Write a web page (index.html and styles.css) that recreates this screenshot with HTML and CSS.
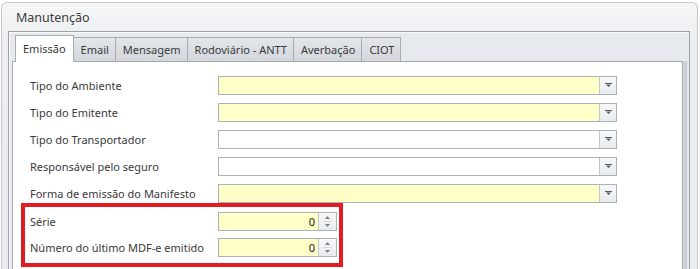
FILE: index.html
```html
<!DOCTYPE html>
<html lang="pt">
<head>
<meta charset="utf-8">
<title>Manutenção</title>
<link rel="stylesheet" href="styles.css">
</head>
<body>
<div class="window">
  <div class="title">Manutenção</div>
  <div class="group">
    <div class="tabs">
      <div class="tab active">Emissão</div>
      <div class="tab">Email</div>
      <div class="tab">Mensagem</div>
      <div class="tab">Rodoviário - ANTT</div>
      <div class="tab">Averbação</div>
      <div class="tab">CIOT</div>
    </div>
    <div class="page">
      <div class="form">
        <label class="lbl">Tipo do Ambiente</label>
        <div class="combo req"><div class="field"></div><div class="btn"><svg width="7" height="4" viewBox="0 0 7 4"><path d="M0 0h7v1H0z M1 1.5h5L3.5 4z" fill="#555a60"/></svg></div></div>
        <label class="lbl">Tipo do Emitente</label>
        <div class="combo req"><div class="field"></div><div class="btn"><svg width="7" height="4" viewBox="0 0 7 4"><path d="M0 0h7v1H0z M1 1.5h5L3.5 4z" fill="#555a60"/></svg></div></div>
        <label class="lbl">Tipo do Transportador</label>
        <div class="combo"><div class="field"></div><div class="btn"><svg width="7" height="4" viewBox="0 0 7 4"><path d="M0 0h7v1H0z M1 1.5h5L3.5 4z" fill="#555a60"/></svg></div></div>
        <label class="lbl">Responsável pelo seguro</label>
        <div class="combo"><div class="field"></div><div class="btn"><svg width="7" height="4" viewBox="0 0 7 4"><path d="M0 0h7v1H0z M1 1.5h5L3.5 4z" fill="#555a60"/></svg></div></div>
        <label class="lbl">Forma de emissão do Manifesto</label>
        <div class="combo req"><div class="field"></div><div class="btn"><svg width="7" height="4" viewBox="0 0 7 4"><path d="M0 0h7v1H0z M1 1.5h5L3.5 4z" fill="#555a60"/></svg></div></div>
        <label class="lbl spin-row">Série</label>
        <div class="spin req spin-row"><div class="field num">0</div><div class="sbtn"><svg width="5" height="3" viewBox="0 0 5 3"><path d="M0 3h5L2.5 0z" fill="#7a7f86"/></svg><span class="sep"></span><svg width="5" height="3" viewBox="0 0 5 3"><path d="M0 0h5L2.5 3z" fill="#7a7f86"/></svg></div></div>
        <label class="lbl">Número do último MDF-e emitido</label>
        <div class="spin req"><div class="field num">0</div><div class="sbtn"><svg width="5" height="3" viewBox="0 0 5 3"><path d="M0 3h5L2.5 0z" fill="#7a7f86"/></svg><span class="sep"></span><svg width="5" height="3" viewBox="0 0 5 3"><path d="M0 0h5L2.5 3z" fill="#7a7f86"/></svg></div></div>
      </div>
    </div>
  </div>
</div>
<div class="highlight"></div>
</body>
</html>
```
FILE: styles.css
```css
html, body {
  margin: 0;
  padding: 0;
  background: #ffffff;
  font-family: "Noto Sans", "Open Sans", sans-serif;
  color: #3a3a3a;
  overflow: hidden;
}
.window {
  margin: 2px 2px 0 1px;
  height: 267px;
  border: 1px solid #c6c8cb;
  border-bottom: none;
  border-radius: 6px 6px 0 0;
  background: linear-gradient(#f6f6f6, #eceef1 40px, #e9ecf0);
  box-sizing: border-box;
  display: flex;
  flex-direction: column;
}
.title {
  height: 28px;
  flex: none;
  padding-left: 14px;
  font-size: 12.5px;
  line-height: 30px;
  color: #3c3c3c;
}
.group {
  flex: 1;
  margin: 0 7px 0 6px;
  border: 1px solid #9da2a8;
  border-bottom: none;
  box-shadow: inset 1px 1px 0 #f7f8fa;
  background: #e6e9ee;
  padding: 3px 6px 0 3px;
  display: flex;
  flex-direction: column;
}
.tabs {
  display: flex;
  align-items: flex-end;
  padding-left: 3px;
  height: 26px;
  flex: none;
  position: relative;
  z-index: 1;
}
.tab {
  box-sizing: border-box;
  height: 24px;
  padding: 0 6px 0 7px;
  border: 1px solid #a7acb3;
  border-bottom: none;
  margin-left: -1px;
  background: linear-gradient(#e3e6ea, #d3d7dc);
  font-size: 11px;
  line-height: 23px;
  color: #3a3a3a;
}
.tab:first-child { margin-left: 0; }
.tab.active {
  height: 27px;
  margin-bottom: -1px;
  padding: 0 7px;
  background: #ffffff;
  line-height: 25px;
}
.page {
  flex: 1;
  background: #ffffff;
  border: 1px solid #a3a8ae;
  border-bottom: none;
  box-shadow: 2px 0 0 #d2d6dc, 4px 0 0 #c5cad0;
  padding: 14px 0 0 17px;
}
.form {
  display: grid;
  grid-template-columns: 188px 399px;
  grid-auto-rows: 19px;
  row-gap: 8px;
  align-items: center;
}
.lbl {
  font-size: 11px;
  color: #3a3a3a;
  white-space: nowrap;
}
.spin-row { margin-top: 2px; }
.combo, .spin {
  display: flex;
  box-sizing: border-box;
  height: 19px;
  border: 1px solid #adb2b9;
  background: #ffffff;
}
.spin { width: 119px; }
.req .field { background: #ffffc8; }
.field { flex: 1; }
.num {
  font-size: 11px;
  line-height: 17px;
  text-align: right;
  padding-right: 3px;
  color: #202020;
}
.btn {
  width: 16px;
  border-left: 1px solid #c3c7cd;
  background: linear-gradient(#f7f8f9, #e8ebee);
  display: flex;
  align-items: center;
  justify-content: center;
}
.btn svg { margin-top: -1px; }
.sbtn {
  width: 17px;
  border-left: 1px solid #c3c7cd;
  background: linear-gradient(#f7f8f9, #e8ebee);
  display: flex;
  flex-direction: column;
  align-items: center;
  justify-content: center;
  gap: 2px;
}
.sep {
  width: 9px;
  height: 1px;
  background: #d6d9dd;
}
.highlight {
  position: absolute;
  left: 21px;
  top: 203px;
  width: 322px;
  height: 64px;
  box-sizing: border-box;
  border: 4px solid #e31b23;
}
```
